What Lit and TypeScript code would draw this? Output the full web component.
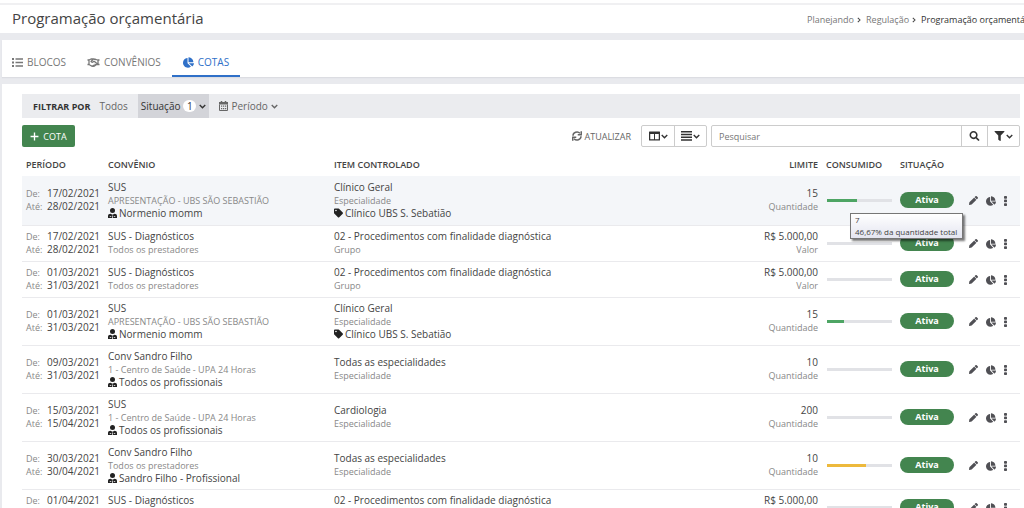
import { LitElement, html, css, svg, nothing } from "lit";
import { customElement, property } from "lit/decorators.js";

const shapes: Record<string, { box: string; body: unknown }> = {
  list: {
    box: "0 0 22 18",
    body: svg`<path d="M0 0h4v4H0zM0 7h4v4H0zM0 14h4v4H0zM7 0.500h15v3H7zM7 7.500h15v3H7zM7 14.500h15v3H7z"/>`,
  },
  handshake: {
    box: "0 0 26 18",
    body: svg`<g fill="none" stroke="currentColor" stroke-width="2.600" stroke-linejoin="round"><path d="M1 4h3l4-2h5l5 1 3 1h4M1 13h3l5 3 3 0.500 3-0.500 4-3h6M12 3 8 7c1 2 4 2 5 0h2l6 5M4 4v9M22 4v9M12 14l2 2M15 12l3 2"/></g>`,
  },
  pie: {
    box: "0 0 544 512",
    body: svg`<path d="M527.790 288H290.500l158.030 158.030c6.040 6.040 15.980 6.530 22.190.68 38.700-36.460 65.320-85.610 73.130-140.860 1.340-9.460-6.510-17.850-16.060-17.850zm-15.830-64.800C503.720 103.740 408.260 8.280 288.800.04 279.680-.59 272 7.100 272 16.240V240h223.770c9.140 0 16.820-7.680 16.190-16.800zM224 288V50.710c0-9.550-8.390-17.400-17.840-16.060C86.990 51.490-4.100 155.600.14 280.370 4.500 408.510 114.830 513.590 243.030 511.980c50.400-.63 96.970-16.870 135.260-44.030 7.900-5.600 8.420-17.230 1.570-24.080L224 288z"/>`,
  },
  calendar: {
    box: "0 0 18 20",
    body: svg`<path d="M3.500 0h3v2h5V0h3v2H18v5H0V2h3.500z"/><path d="M1 7v12h16V7" fill="none" stroke="currentColor" stroke-width="2"/><path d="M4 9h2.500v2.500H4zM8 9h2.500v2.500H8zM12 9h2.500v2.500H12zM4 14h2.500v2.500H4zM8 14h2.500v2.500H8zM12 14h2.500v2.500H12z"/>`,
  },
  chevron: {
    box: "0 0 14 10",
    body: svg`<path d="M1.500 2 7 7.500 12.500 2" fill="none" stroke="currentColor" stroke-width="2.800"/>`,
  },
  next: {
    box: "0 0 10 14",
    body: svg`<path d="M2 1.500 7.500 7 2 12.500" fill="none" stroke="currentColor" stroke-width="2.600"/>`,
  },
  plus: { box: "0 0 16 16", body: svg`<path d="M6.800 1h2.400v5.800H15v2.400H9.200V15H6.800V9.200H1V6.800h5.800z"/>` },
  sync: {
    box: "0 0 20 20",
    body: svg`<g fill="none" stroke="currentColor" stroke-width="3"><path d="M2 9.500a8 7.500 0 0 1 14-5M18 10.500a8 7.500 0 0 1-14 5"/><path d="M18.500 0.500v7H11.500M1.500 19.500v-7H8.500"/></g>`,
  },
  columns: {
    box: "0 0 22 18",
    body: svg`<path fill-rule="evenodd" d="M1 0h20a1 1 0 0 1 1 1v16a1 1 0 0 1-1 1H1a1 1 0 0 1-1-1V1a1 1 0 0 1 1-1zM2.500 5v10.500H10V5zM12 5v10.500h7.500V5z"/>`,
  },
  bars: { box: "0 0 20 18", body: svg`<path d="M0 0h20v2.500H0zM0 5h20v2.500H0zM0 10h20v2.500H0zM0 15h20v2.500H0z"/>` },
  search: {
    box: "0 0 512 512",
    body: svg`<path d="M505 442.700L405.300 343c-4.500-4.500-10.600-7-17-7H372c27.600-35.300 44-79.700 44-128C416 93.100 322.900 0 208 0S0 93.100 0 208s93.100 208 208 208c48.300 0 92.700-16.400 128-44v16.300c0 6.400 2.500 12.500 7 17l99.700 99.700c9.400 9.400 24.600 9.400 33.900 0l28.300-28.300c9.400-9.400 9.400-24.600.1-34zM208 336c-70.700 0-128-57.200-128-128 0-70.700 57.200-128 128-128 70.700 0 128 57.200 128 128 0 70.700-57.200 128-128 128z"/>`,
  },
  filter: {
    box: "0 0 512 512",
    body: svg`<path d="M487.976 0H24.028C2.710 0-8.047 25.866 7.058 40.971L192 225.941V432c0 7.831 3.821 15.170 10.237 19.662l80 55.980C298.020 518.690 320 507.493 320 487.980V225.941l184.947-184.970C520.021 25.896 509.338 0 487.976 0z"/>`,
  },
  doctor: {
    box: "0 0 18 20",
    body: svg`<circle cx="9" cy="5" r="5"/><path fill-rule="evenodd" d="M0 20v-4c0-3 2-4.500 5-4.500l4 2 4-2c3 0 5 1.500 5 4.500v4zM3.500 16v1.500h3V16zM11.500 16v1.500h3V16zM8.300 15v5h1.400v-5z"/>`,
  },
  tag: {
    box: "0 0 512 512",
    body: svg`<path d="M0 252.118V48C0 21.490 21.490 0 48 0h204.118a48 48 0 0 1 33.941 14.059l211.882 211.882c18.745 18.745 18.745 49.137 0 67.882L293.823 497.941c-18.745 18.745-49.137 18.745-67.882 0L14.059 286.059A48 48 0 0 1 0 252.118zM112 64c-26.510 0-48 21.490-48 48s21.490 48 48 48 48-21.490 48-48-21.490-48-48-48z"/>`,
  },
  pencil: {
    box: "0 0 512 512",
    body: svg`<path d="M497.900 142.100l-46.100 46.100c-4.700 4.700-12.300 4.700-17 0l-111-111c-4.700-4.700-4.700-12.300 0-17l46.100-46.100c18.700-18.700 49.100-18.700 67.900 0l60.100 60.100c18.800 18.700 18.800 49.100 0 67.900zM284.200 99.800L21.600 362.400.4 483.900c-2.900 16.400 11.400 30.600 27.800 27.800l121.500-21.300 262.600-262.600c4.700-4.700 4.700-12.300 0-17l-111-111c-4.800-4.700-12.400-4.700-17.100 0z"/>`,
  },
  dots: {
    box: "0 0 6 20",
    body: svg`<rect x="0" y="0" width="6" height="5.500" rx="1.500"/><rect x="0" y="7.200" width="6" height="5.500" rx="1.500"/><rect x="0" y="14.500" width="6" height="5.500" rx="1.500"/>`,
  },
};

@customElement("ui-icon")
class UiIcon extends LitElement {
  @property() name = "";
  static styles = css`
    :host {
      display: inline-flex;
      flex: none;
      width: 10px;
      height: 10px;
    }
    .glyph {
      display: block;
      width: 100%;
      height: 100%;
      fill: currentColor;
    }
  `;
  render() {
    const shape = shapes[this.name];
    return html`<svg class="glyph" viewBox=${shape.box} aria-hidden="true">${shape.body}</svg>`;
  }
}

interface Quota {
  from: string;
  to: string;
  plan: string;
  provider: string;
  person?: string;
  item: string;
  kind: string;
  tag?: string;
  limit: string;
  unit: string;
  used: number;
  warn?: boolean;
  tip?: [string, string];
}

const diagnostics = {
  plan: "SUS - Diagnósticos",
  provider: "Todos os prestadores",
  item: "02 - Procedimentos com finalidade diagnóstica",
  kind: "Grupo",
  limit: "R$ 5.000,00",
  unit: "Valor",
  used: 0,
};
const clinic = {
  plan: "SUS",
  provider: "APRESENTAÇÃO - UBS SÃO SEBASTIÃO",
  person: "Normenio momm",
  item: "Clínico Geral",
  kind: "Especialidade",
  tag: "Clínico UBS S. Sebatião",
  limit: "15",
  unit: "Quantidade",
};

const quotas: Quota[] = [
  { from: "17/02/2021", to: "28/02/2021", ...clinic, used: 46.67, tip: ["7", "46,67% da quantidade total"] },
  { from: "17/02/2021", to: "28/02/2021", ...diagnostics },
  { from: "01/03/2021", to: "31/03/2021", ...diagnostics },
  { from: "01/03/2021", to: "31/03/2021", ...clinic, used: 26.67 },
  {
    from: "09/03/2021", to: "31/03/2021", plan: "Conv Sandro Filho", provider: "1 - Centro de Saúde - UPA 24 Horas",
    person: "Todos os profissionais", item: "Todas as especialidades", kind: "Especialidade",
    limit: "10", unit: "Quantidade", used: 0,
  },
  {
    from: "15/03/2021", to: "15/04/2021", plan: "SUS", provider: "1 - Centro de Saúde - UPA 24 Horas",
    person: "Todos os profissionais", item: "Cardiologia", kind: "Especialidade",
    limit: "200", unit: "Quantidade", used: 0,
  },
  {
    from: "30/03/2021", to: "30/04/2021", plan: "Conv Sandro Filho", provider: "Todos os prestadores",
    person: "Sandro Filho - Profissional", item: "Todas as especialidades", kind: "Especialidade",
    limit: "10", unit: "Quantidade", used: 60, warn: true,
  },
  { from: "01/04/2021", to: "30/04/2021", ...diagnostics },
];

@customElement("app-root")
class AppRoot extends LitElement {
  static styles = css`
    :host {
      display: block;
      height: 100vh;
      overflow: hidden;
      background: #e9eaee;
      color: #444;
      font: 10px/13px "Open Sans", "Noto Sans", sans-serif;
    }
    * { box-sizing: border-box; }
    button, input { font: inherit; color: inherit; margin: 0; padding: 0; border: 0; background: none; }
    a { color: inherit; text-decoration: none; }
    .top {
      display: flex;
      align-items: center;
      justify-content: space-between;
      height: 33px;
      padding: 3px 0 0 12px;
      border-top: 3px solid #fff;
      background: linear-gradient(#f0f0f2 2px, #fff 2px);
    }
    h1 { margin: 0; font-size: 15px; line-height: 20px; font-weight: 400; padding-bottom: 4px; }
    .crumbs {
      display: flex;
      flex: none;
      align-items: center;
      gap: 5px;
      margin-right: -12px;
      font-size: 9px;
      color: #777;
    }
    .crumbs ui-icon { width: 4px; height: 6px; color: #444; }
    .crumb { display: flex; align-items: center; gap: 3px; }
    .current { color: #333; }
    .tabs {
      display: flex;
      align-items: flex-end;
      gap: 1px;
      height: 37px;
      margin: 7px 0 7px 2px;
      background: #fff;
      box-shadow: 0 1px 1px #dcdde2;
    }
    .tab {
      display: flex;
      align-items: center;
      gap: 4px;
      height: 27px;
      padding: 0 10px;
      border-bottom: 2px solid transparent;
      color: #777;
    }
    .tab ui-icon { width: 11px; height: 11px; }
    .tab ui-icon.wide { width: 13px; }
    .tab.on { padding: 0 11px; color: #2f70c8; border-color: #2f70c8; }
    .card { margin-left: 2px; padding: 10px 4px 0 20px; background: #fff; }
    .filters {
      display: flex;
      align-items: center;
      height: 24px;
      padding-left: 11px;
      background: #ebecef;
      color: #666;
    }
    .filters button { display: flex; align-items: center; gap: 3px; height: 24px; }
    .filters strong { color: #333; font-weight: 700; font-size: 9px; margin-right: 9px; }
    .filters ui-icon { width: 7px; height: 5px; }
    .filters ui-icon.cal { width: 9px; height: 10px; }
    .filters .all { margin-right: 10px; }
    .filters .picked { padding: 0 3px; margin-right: 10px; background: #d3d4d9; color: #333; }
    .count { min-width: 13px; border-radius: 7px; background: #fff; text-align: center; line-height: 12px; }
    .tools { display: flex; align-items: center; height: 22px; margin-top: 7px; }
    .tools .add {
      display: flex;
      align-items: center;
      justify-content: center;
      gap: 4px;
      width: 53px;
      height: 22px;
      margin-right: auto;
      border-radius: 2px;
      background: #43854f;
      color: #fff;
      font-size: 9px;
    }
    .add ui-icon { width: 9px; height: 9px; }
    .refresh { display: flex; align-items: center; gap: 2px; margin-right: 10px; font-size: 9px; color: #666; }
    .group { display: flex; height: 22px; border: 1px solid #ccc; border-radius: 2px; color: #333; }
    .group button { display: flex; align-items: center; justify-content: center; gap: 1px; width: 32px; }
    .group > * + * { border-left: 1px solid #ccc; }
    .group ui-icon { width: 11px; }
    .group ui-icon.chev { width: 7px; height: 5px; }
    .views { margin-right: 4px; }
    .search { flex: 0 1 309px; }
    .search input { flex: 1; min-width: 0; padding: 0 7px; font-size: 9px; }
    .search input::placeholder { color: #777; opacity: 1; }
    .search .go { width: 26px; }
    table { width: 100%; border-collapse: collapse; table-layout: fixed; margin-top: 6px; }
    th { height: 23px; padding: 0 4px; text-align: left; font-weight: 600; font-size: 9px; color: #444; }
    td { height: 36px; padding: 4px; border-bottom: 1px solid #eaeaed; }
    th.num, td.num { text-align: right; }
    tr.hover td { height: 49px; background: #f4f6f9; }
    .c-period { width: 82px; }
    .c-plan { width: 226px; }
    .c-limit { width: 80px; }
    .c-used { width: 74px; }
    .c-state { width: 62px; }
    .c-act { width: 62px; }
    .dates { display: grid; grid-template-columns: 21px auto; margin: 0; }
    .dates dt, .sub { color: #888; font-size: 9px; }
    .dates dd { margin: 0; }
    .line { display: flex; align-items: center; gap: 2px; }
    .line ui-icon { width: 9px; height: 10px; color: #222; }
    .meter { position: relative; }
    .track { height: 3px; width: 65px; margin-left: 1px; background: #e1e2e6; }
    .fill { height: 3px; background: #4ea564; }
    .fill.warn { background: #edb93c; }
    .tip {
      position: absolute;
      z-index: 2;
      top: 14px;
      left: 24px;
      padding: 0 5px 0 4px;
      border: 1px solid #767676;
      background: linear-gradient(#fff, #e4e5f0);
      box-shadow: 2px 2px 2px #0008;
      white-space: nowrap;
      font-size: 8px;
      line-height: 12px;
      color: #444;
    }
    .badge {
      display: block;
      width: 54px;
      border-radius: 8px;
      background: #43854f;
      color: #fff;
      font-size: 9px;
      font-weight: 700;
      line-height: 16px;
      text-align: center;
    }
    .acts { display: flex; align-items: center; gap: 8px; padding: 1px 0 0 7px; color: #505055; }
    .acts button { display: flex; }
    .acts ui-icon { width: 9px; height: 9px; }
    .acts ui-icon[name="pie"] { width: 10px; height: 10px; }
    .acts ui-icon.more { width: 3px; height: 10px; }
  `;

  private row(q: Quota) {
    return html`<tr class=${q.tip ? "hover" : ""}>
      <td><dl class="dates"><dt>De:</dt><dd>${q.from}</dd><dt>Até:</dt><dd>${q.to}</dd></dl></td>
      <td>
        <div>${q.plan}</div>
        <div class="sub">${q.provider}</div>
        ${q.person ? html`<div class="line"><ui-icon name="doctor"></ui-icon>${q.person}</div>` : nothing}
      </td>
      <td>
        <div>${q.item}</div>
        <div class="sub">${q.kind}</div>
        ${q.tag ? html`<div class="line"><ui-icon name="tag"></ui-icon>${q.tag}</div>` : nothing}
      </td>
      <td class="num"><div>${q.limit}</div><div class="sub">${q.unit}</div></td>
      <td>
        <div class="meter">
          <div class="track"><div class="fill ${q.warn ? "warn" : ""}" style="width:${q.used}%"></div></div>
          ${q.tip ? html`<div class="tip" role="tooltip">${q.tip[0]}<br />${q.tip[1]}</div>` : nothing}
        </div>
      </td>
      <td><span class="badge">Ativa</span></td>
      <td>
        <div class="acts">
          <button aria-label="Editar"><ui-icon name="pencil"></ui-icon></button>
          <button aria-label="Consumo"><ui-icon name="pie"></ui-icon></button>
          <button aria-label="Mais opções"><ui-icon class="more" name="dots"></ui-icon></button>
        </div>
      </td>
    </tr>`;
  }

  render() {
    return html`
      <header class="top">
        <h1>Programação orçamentária</h1>
        <nav class="crumbs">
          <span class="crumb"><a href="#">Planejando</a><ui-icon name="next"></ui-icon></span>
          <span class="crumb"><a href="#">Regulação</a><ui-icon name="next"></ui-icon></span>
          <span class="current">Programação orçamentária</span>
        </nav>
      </header>
      <nav class="tabs">
        <a class="tab" href="#"><ui-icon name="list"></ui-icon>BLOCOS</a>
        <a class="tab" href="#"><ui-icon class="wide" name="handshake"></ui-icon>CONVÊNIOS</a>
        <a class="tab on" href="#"><ui-icon name="pie"></ui-icon>COTAS</a>
      </nav>
      <main class="card">
        <div class="filters">
          <strong>FILTRAR POR</strong>
          <button class="all">Todos</button>
          <button class="picked">Situação <span class="count">1</span><ui-icon name="chevron"></ui-icon></button>
          <button><ui-icon class="cal" name="calendar"></ui-icon>Período<ui-icon name="chevron"></ui-icon></button>
        </div>
        <div class="tools">
          <button class="add"><ui-icon name="plus"></ui-icon>COTA</button>
          <button class="refresh"><ui-icon name="sync"></ui-icon>ATUALIZAR</button>
          <div class="group views">
            <button aria-label="Colunas"><ui-icon name="columns"></ui-icon><ui-icon class="chev" name="chevron"></ui-icon></button>
            <button aria-label="Densidade"><ui-icon name="bars"></ui-icon><ui-icon class="chev" name="chevron"></ui-icon></button>
          </div>
          <div class="group search">
            <input type="search" aria-label="Pesquisar" placeholder="Pesquisar" />
            <button class="go" aria-label="Buscar"><ui-icon name="search"></ui-icon></button>
            <button aria-label="Filtros"><ui-icon name="filter"></ui-icon><ui-icon class="chev" name="chevron"></ui-icon></button>
          </div>
        </div>
        <table>
          <thead>
            <tr>
              <th class="c-period">PERÍODO</th>
              <th class="c-plan">CONVÊNIO</th>
              <th>ITEM CONTROLADO</th>
              <th class="c-limit num">LIMITE</th>
              <th class="c-used">CONSUMIDO</th>
              <th class="c-state">SITUAÇÃO</th>
              <th class="c-act"></th>
            </tr>
          </thead>
          <tbody>${quotas.map((q) => this.row(q))}</tbody>
        </table>
      </main>
    `;
  }
}
